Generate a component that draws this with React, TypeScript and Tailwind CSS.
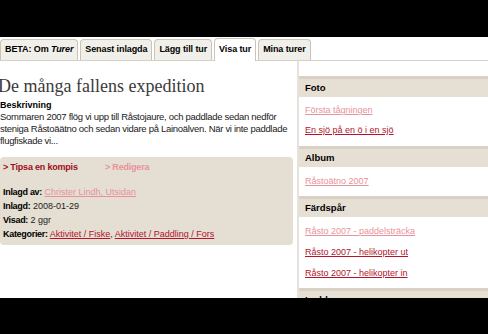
import React from "react";

const font = { fontFamily: '"Liberation Sans", Arial, sans-serif' };

function Tab({ children, active }: { children: React.ReactNode; active?: boolean }) {
  return (
    <div
      className={
        "px-[4px] flex items-center rounded-t-[4px] border border-b-0 border-[#c9c4b8] text-[9px] font-bold tracking-[-0.1px] text-black " +
        (active ? "bg-white h-[23px] -mb-px" : "bg-[#f1efe9] h-[21px]")
      }
    >
      {children}
    </div>
  );
}

function SideHeader({ children }: { children: React.ReactNode }) {
  return (
    <div className="h-[21px] bg-[#e6dfd3] border-t-[3px] border-[#d9d1c4] flex items-center pl-[6px] text-[9.5px] font-bold text-black">
      {children}
    </div>
  );
}

function DarkLink({ children }: { children: React.ReactNode }) {
  return <span className="text-[#b3132d] underline underline-offset-1">{children}</span>;
}
function PinkLink({ children }: { children: React.ReactNode }) {
  return <span className="text-[#e8929c] underline underline-offset-1">{children}</span>;
}

export default function App() {
  return (
    <div className="w-[488px] h-[334px] bg-white overflow-hidden flex flex-col" style={font}>
      <div className="h-[37px] bg-black shrink-0" />
      <div className="flex-1 flex flex-col overflow-hidden">
        <div className="flex items-end gap-[2px] pt-[1px] border-b border-[#d6d1c6] h-[24px]">
          <Tab>
            BETA: Om&nbsp;<i>Turer</i>
          </Tab>
          <Tab>Senast inlagda</Tab>
          <Tab>Lägg till tur</Tab>
          <Tab active>Visa tur</Tab>
          <Tab>Mina turer</Tab>
        </div>
        <div className="flex flex-1">
          <div className="w-[293px] shrink-0 pt-[14px]">
            <h1
              className="text-[18px] leading-[22px] text-[#3a3a3a] -ml-[2px] whitespace-nowrap"
              style={{ fontFamily: '"Liberation Serif", "Times New Roman", serif' }}
            >
              De många fallens expedition
            </h1>
            <div className="mt-[3px] text-[9px] font-bold leading-[11px] text-black">Beskrivning</div>
            <p className="text-[9.5px] tracking-[-0.3px] leading-[12px] text-[#222]">
              Sommaren 2007 flög vi upp till Råstojaure, och paddlade sedan nedför steniga Råstoäätno och sedan vidare på Lainoälven. När vi inte paddlade flugfiskade vi...
            </p>
            <div className="mt-[10px] bg-[#e5ded2] rounded-[4px] px-[3px] pt-[3px] pb-[4px] text-[9px] leading-[14px] text-[#222]">
              <div className="flex font-bold tracking-[-0.2px]">
                <span className="text-[#9b0e22] w-[102px]">&gt; Tipsa en kompis</span>
                <span className="text-[#e8929c]">&gt; Redigera</span>
              </div>
              <div className="mt-[11px]">
                <b className="text-black tracking-[-0.3px]">Inlagd av:</b> <PinkLink>Christer Lindh, Utsidan</PinkLink>
              </div>
              <div>
                <b className="text-black tracking-[-0.3px]">Inlagd:</b> 2008-01-29
              </div>
              <div>
                <b className="text-black tracking-[-0.3px]">Visad:</b> 2 ggr
              </div>
              <div>
                <b className="text-black tracking-[-0.3px]">Kategorier:</b> <DarkLink>Aktivitet / Fiske</DarkLink>,{" "}
                <DarkLink>Aktivitet / Paddling / Fors</DarkLink>
              </div>
            </div>
          </div>
          <div className="ml-[4px] flex-1 border-l-2 border-[#e6e3de] pt-[15px] text-[9px]">
            <SideHeader>Foto</SideHeader>
            <div className="pl-[6px] pt-[7px] pb-[10px] flex flex-col gap-[8px] leading-[12px]">
              <PinkLink>Första tågningen</PinkLink>
              <DarkLink>En sjö på en ö i en sjö</DarkLink>
            </div>
            <SideHeader>Album</SideHeader>
            <div className="pl-[6px] pt-[8px] pb-[9px] flex flex-col gap-[8px] leading-[12px]">
              <PinkLink>Råstoätno 2007</PinkLink>
            </div>
            <SideHeader>Färdspår</SideHeader>
            <div className="pl-[6px] pt-[8px] pb-[9px] flex flex-col gap-[9px] leading-[12px]">
              <PinkLink>Råsto 2007 - paddelsträcka</PinkLink>
              <DarkLink>Råsto 2007 - helikopter ut</DarkLink>
              <DarkLink>Råsto 2007 - helikopter in</DarkLink>
            </div>
            <SideHeader>Ledda arrangemang</SideHeader>
          </div>
        </div>
      </div>
      <div className="h-[36px] bg-black shrink-0" />
    </div>
  );
}
